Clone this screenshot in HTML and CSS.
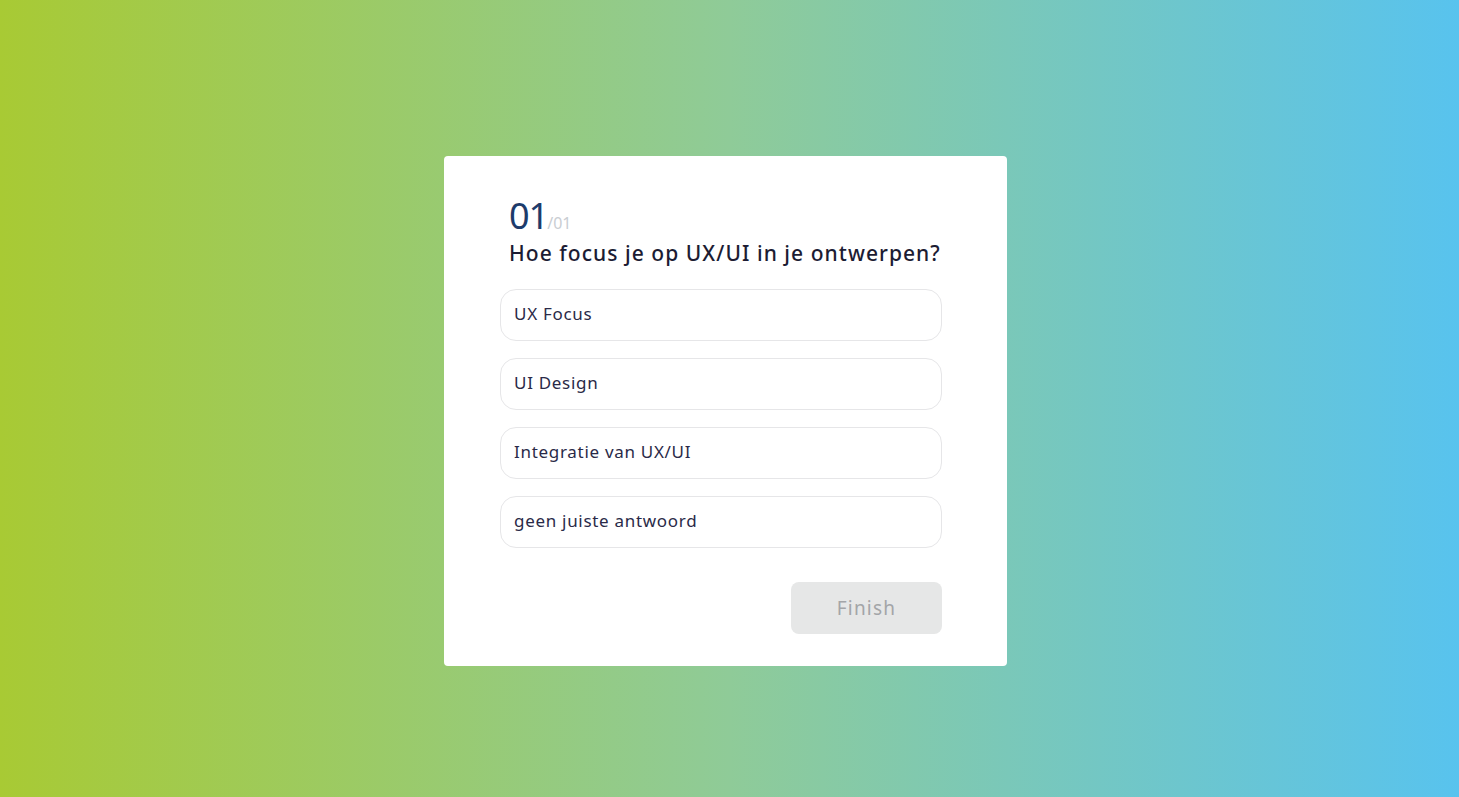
FILE: index.html
```html
<!DOCTYPE html>
<html lang="nl">
<head>
<meta charset="utf-8">
<title>Quiz</title>
<link rel="stylesheet" href="styles.css">
</head>
<body>
<main class="page">
  <section class="card">
    <div class="counter"><span class="num">01</span><span class="total">/01</span></div>
    <h1 class="question">Hoe focus je op UX/UI in je ontwerpen?</h1>
    <ul class="options">
      <li class="option">UX Focus</li>
      <li class="option">UI Design</li>
      <li class="option">Integratie van UX/UI</li>
      <li class="option">geen juiste antwoord</li>
    </ul>
    <div class="actions"><button class="finish" disabled>Finish</button></div>
  </section>
</main>
</body>
</html>
```
FILE: styles.css
```css
* { box-sizing: border-box; }
html, body { margin: 0; height: 100%; }
body {
  font-family: "Noto Sans", "Open Sans", sans-serif;
  background: linear-gradient(90deg, #a8ca34 0%, #8fcb98 50%, #58c3ee 100%);
}
.page {
  height: 797px;
  display: flex;
  align-items: flex-start;
  justify-content: center;
  padding-top: 156px;
  padding-right: 8px;
}
.card {
  width: 563px;
  height: 510px;
  background: #fff;
  border-radius: 4px;
  padding: 38px 65px 32px 56px;
}
.counter {
  padding-left: 9px;
  line-height: 44px;
  height: 44px;
}
.num {
  font-size: 36px;
  color: #1d3b6b;
  letter-spacing: -1px;
}
.total {
  font-size: 16px;
  color: #c9cdd2;
  margin-left: -1px;
}
.question {
  margin: 0 0 21px;
  padding-left: 9px;
  font-size: 21px;
  font-weight: 500;
  color: #1c1c33;
  line-height: 30px;
  letter-spacing: 1.05px;
  white-space: nowrap;
}
.options {
  list-style: none;
  margin: 0;
  padding: 0;
  display: flex;
  flex-direction: column;
  gap: 17px;
}
.option {
  height: 52px;
  border: 1px solid #e6e6e8;
  border-radius: 16px;
  padding: 0 13px 3px;
  display: flex;
  align-items: center;
  font-size: 17px;
  color: #2a2a48;
  letter-spacing: 0.7px;
}
.actions {
  display: flex;
  justify-content: flex-end;
  margin-top: 34px;
}
.finish {
  width: 151px;
  height: 52px;
  border: none;
  border-radius: 8px;
  background: #e6e7e7;
  color: #a3a5a8;
  font-family: inherit;
  font-size: 19px;
  letter-spacing: 1.2px;
  padding-bottom: 2px;
}
```
